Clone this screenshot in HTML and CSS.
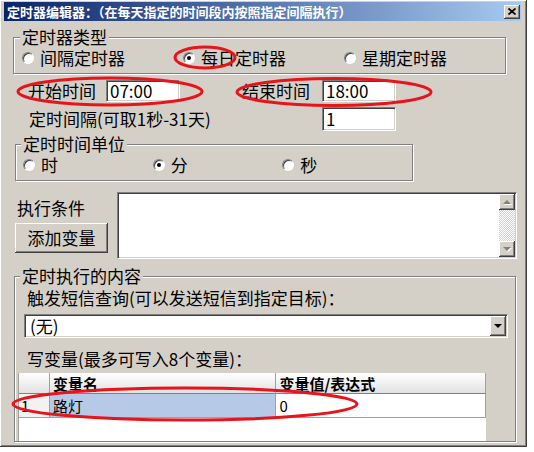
FILE: index.html
```html
<!DOCTYPE html>
<html lang="zh-CN">
<head>
    <meta charset="UTF-8">
    <title>定时器编辑器</title>
    <link rel="stylesheet" href="styles.css">
</head>
<body>
    <div class="window">
        <div class="titlebar">
            <span>定时器编辑器：（在每天指定的时间段内按照指定间隔执行）</span>
            <span class="close">
                <svg width="8" height="7" viewBox="0 0 8 7"><path d="M0.5 0.5L7.5 6.5M7.5 0.5L0.5 6.5" stroke="#000" stroke-width="1.7"/></svg>
            </span>
        </div>

        <fieldset class="group group-type">
            <legend>定时器类型</legend>
            <div class="options">
                <label class="option wide"><span class="radio"></span>间隔定时器</label>
                <label class="option wide"><span class="radio on"></span>每日定时器</label>
                <label class="option wide"><span class="radio"></span>星期定时器</label>
            </div>
        </fieldset>

        <div class="row row-time">
            <span class="lbl lbl-start">开始时间</span>
            <span class="input in-time">07:00</span>
            <span class="lbl lbl-end">结束时间</span>
            <span class="input in-time">18:00</span>
        </div>

        <div class="row row-interval">
            <span class="lbl lbl-interval">定时间隔(可取1秒-31天)</span>
            <span class="input in-interval">1</span>
        </div>

        <fieldset class="group group-unit">
            <legend>定时时间单位</legend>
            <div class="options">
                <label class="option narrow"><span class="radio"></span>时</label>
                <label class="option narrow"><span class="radio on"></span>分</label>
                <label class="option narrow"><span class="radio"></span>秒</label>
            </div>
        </fieldset>

        <div class="row row-cond">
            <div class="cond-left">
                <div class="cond-label">执行条件</div>
                <div class="btn">添加变量</div>
            </div>
            <div class="memo">
                <div class="scrollbar">
                    <div class="sb-btn"><span class="arrow up"></span></div>
                    <div class="sb-track"></div>
                    <div class="sb-btn"><span class="arrow down"></span></div>
                </div>
            </div>
        </div>

        <fieldset class="group group-content">
            <legend>定时执行的内容</legend>
            <div class="hint">触发短信查询(可以发送短信到指定目标)：</div>
            <div class="select">
                <span>(无)</span>
                <span class="drop"><span class="drop-arrow"></span></span>
            </div>
            <div class="hint hint-vars">写变量(最多可写入8个变量)：</div>
            <div class="grid">
                <div class="grid-row grid-head">
                    <div class="cell c0"></div>
                    <div class="cell c1">变量名</div>
                    <div class="cell c2">变量值/表达式</div>
                </div>
                <div class="grid-row grid-data">
                    <div class="cell c0">1</div>
                    <div class="cell c1 selected">路灯</div>
                    <div class="cell c2">0</div>
                </div>
            </div>
        </fieldset>
    </div>

    <!-- red annotation marks drawn over the dialog -->
    <svg class="marks" width="534" height="452" viewBox="0 0 534 452">
        <ellipse cx="205" cy="57.5" rx="30" ry="10.5"/>
        <ellipse cx="110" cy="91.5" rx="92" ry="13.5"/>
        <ellipse cx="334" cy="92" rx="97" ry="13.5"/>
        <ellipse cx="185" cy="404" rx="172" ry="16"/>
    </svg>
</body>
</html>
```

FILE: styles.css
```css
* {
    box-sizing: border-box;
}
body {
    margin: 0;
    width: 534px;
    height: 452px;
    overflow: hidden;
    position: relative;
    background-color: #fff;
    font-family: "Noto Sans CJK SC", "Noto Sans", sans-serif;
    font-size: 17px;
    line-height: 18px;
    color: #000;
}
.window {
    width: 527px;
    height: 447px;
    padding: 2px 5px 0 4px;
    background-color: #d4d0c8;
    border-right: 1px solid #404040;
    border-bottom: 1px solid #404040;
    box-shadow: inset 1px 1px 0 #fff, inset -1px -1px 0 #808080;
}
.titlebar {
    height: 19px;
    display: flex;
    align-items: center;
    justify-content: space-between;
    padding: 0 1px 0 3px;
    background: linear-gradient(to right, #0a246a, #a6caf0);
    color: #fff;
    font-size: 13px;
    font-weight: bold;
    line-height: 19px;
}
.close {
    width: 16px;
    height: 14px;
    display: flex;
    align-items: center;
    justify-content: center;
    background-color: #d4d0c8;
    box-shadow: inset -1px -1px 0 #404040, inset 1px 1px 0 #fff, inset -2px -2px 0 #808080;
}

/* group boxes */
.group {
    margin: 0;
    padding: 0;
    min-width: 0;
    border: 1px solid #808080;
    box-shadow: inset 1px 1px 0 #fff, 1px 1px 0 #fff;
}
.group legend {
    padding: 0 2px;
    line-height: 18px;
    background-color: #d4d0c8;
}
.group-type {
    margin: 7px 0 0 9px;
    width: 493px;
}
.group-type legend {
    margin-left: 6px;
}
.group-unit {
    margin: 4px 0 0 11px;
    width: 398px;
}
.group-unit legend {
    margin-left: 5px;
}
.group-content {
    margin: 8px 0 0 10px;
    width: 502px;
}
.group-content legend {
    margin-left: 5px;
}
.options {
    display: flex;
    padding: 3px 0 6px 8px;
}
.group-unit .options {
    padding-left: 7px;
}
.option {
    display: flex;
    align-items: center;
    height: 18px;
}
.option.wide {
    width: 165px;
}
.option.narrow {
    width: 130px;
}
.radio {
    width: 12px;
    height: 12px;
    margin-right: 6px;
    border-radius: 50%;
    border: 1px solid;
    border-color: #808080 #fff #fff #808080;
    background-color: #fff;
    box-shadow: inset 1px 1px 0 #404040;
    display: flex;
    align-items: center;
    justify-content: center;
}
.radio.on::after {
    content: "";
    width: 4px;
    height: 4px;
    border-radius: 50%;
    background-color: #000;
}

/* plain rows */
.row {
    display: flex;
    align-items: center;
}
.row-time {
    margin-top: 6px;
    height: 22px;
}
.row-interval {
    margin-top: 5px;
    height: 24px;
}
.lbl-start {
    margin-left: 24px;
    width: 78px;
}
.lbl-end {
    margin-left: 62px;
    width: 80px;
}
.lbl-interval {
    margin-left: 25px;
    width: 293px;
}
.input {
    display: block;
    background-color: #fff;
    border: 1px solid;
    border-color: #808080 #fff #fff #808080;
    box-shadow: inset 1px 1px 0 #404040, inset -1px -1px 0 #d4d0c8;
    padding-left: 3px;
}
.in-time {
    width: 74px;
    height: 22px;
    line-height: 20px;
}
.in-interval {
    width: 74px;
    height: 24px;
    line-height: 22px;
}

/* condition area */
.row-cond {
    margin-top: 11px;
    align-items: flex-start;
}
.cond-left {
    margin-left: 11px;
    width: 93px;
}
.cond-label {
    margin-top: 7px;
    padding-left: 2px;
}
.btn {
    margin-top: 6px;
    height: 30px;
    line-height: 30px;
    text-align: center;
    background-color: #d4d0c8;
    box-shadow: inset -1px -1px 0 #404040, inset 1px 1px 0 #fff, inset -2px -2px 0 #808080;
}
.memo {
    margin-left: 9px;
    width: 400px;
    height: 67px;
    padding: 1px;
    display: flex;
    justify-content: flex-end;
    background-color: #fff;
    border: 1px solid;
    border-color: #808080 #fff #fff #808080;
    box-shadow: inset 1px 1px 0 #404040, inset -1px -1px 0 #d4d0c8;
}
.scrollbar {
    width: 16px;
    display: flex;
    flex-direction: column;
}
.sb-btn {
    height: 16px;
    display: flex;
    align-items: center;
    justify-content: center;
    background-color: #d4d0c8;
    box-shadow: inset -1px -1px 0 #404040, inset 1px 1px 0 #fff, inset -2px -2px 0 #808080;
}
.sb-track {
    flex: 1;
    background: repeating-conic-gradient(#fff 0 25%, #d4d0c8 0 50%) 0 0 / 2px 2px;
}
.arrow {
    width: 0;
    height: 0;
    border-left: 4px solid transparent;
    border-right: 4px solid transparent;
    filter: drop-shadow(1px 1px 0 #fff);
}
.arrow.up {
    border-bottom: 4px solid #808080;
}
.arrow.down {
    border-top: 4px solid #808080;
}

/* content group */
.hint {
    padding: 4px 0 0 12px;
}
.hint-vars {
    margin-top: 12px;
    padding-top: 0;
}
.select {
    margin: 7px 0 0 9px;
    width: 484px;
    height: 24px;
    padding: 1px 1px 1px 5px;
    display: flex;
    align-items: center;
    justify-content: space-between;
    background-color: #fff;
    border: 1px solid;
    border-color: #808080 #fff #fff #808080;
    box-shadow: inset 1px 1px 0 #404040, inset -1px -1px 0 #d4d0c8;
}
.drop {
    width: 16px;
    height: 20px;
    display: flex;
    align-items: center;
    justify-content: center;
    background-color: #d4d0c8;
    box-shadow: inset -1px -1px 0 #404040, inset 1px 1px 0 #fff, inset -2px -2px 0 #808080;
}
.drop-arrow {
    width: 0;
    height: 0;
    border-left: 4px solid transparent;
    border-right: 4px solid transparent;
    border-top: 4px solid #000;
}
.grid {
    margin: 5px 0 0 3px;
    width: 468px;
    height: 68px;
    background-color: #fff;
    border-left: 1px solid #a0a0a0;
    font-size: 15px;
}
.grid-row {
    display: flex;
}
.cell {
    padding-left: 3px;
    border-right: 1px solid #a0a0a0;
    border-bottom: 1px solid #a0a0a0;
}
.grid-head .cell {
    height: 21px;
    line-height: 21px;
    font-weight: bold;
    background: linear-gradient(#fff, #e2e2e2);
    border-bottom-color: #808080;
}
.grid-data .cell {
    height: 24px;
    line-height: 24px;
}
.c0 {
    width: 31px;
    padding-left: 2px;
}
.grid-data .c0 {
    background-color: #f2f2f2;
}
.c1 {
    width: 227px;
}
.c2 {
    width: 210px;
}
.selected {
    background-color: #b6c9e6;
}

.marks {
    position: absolute;
    top: 0;
    left: 0;
    pointer-events: none;
}
.marks ellipse {
    fill: none;
    stroke: #e8141c;
    stroke-width: 3;
}
```
